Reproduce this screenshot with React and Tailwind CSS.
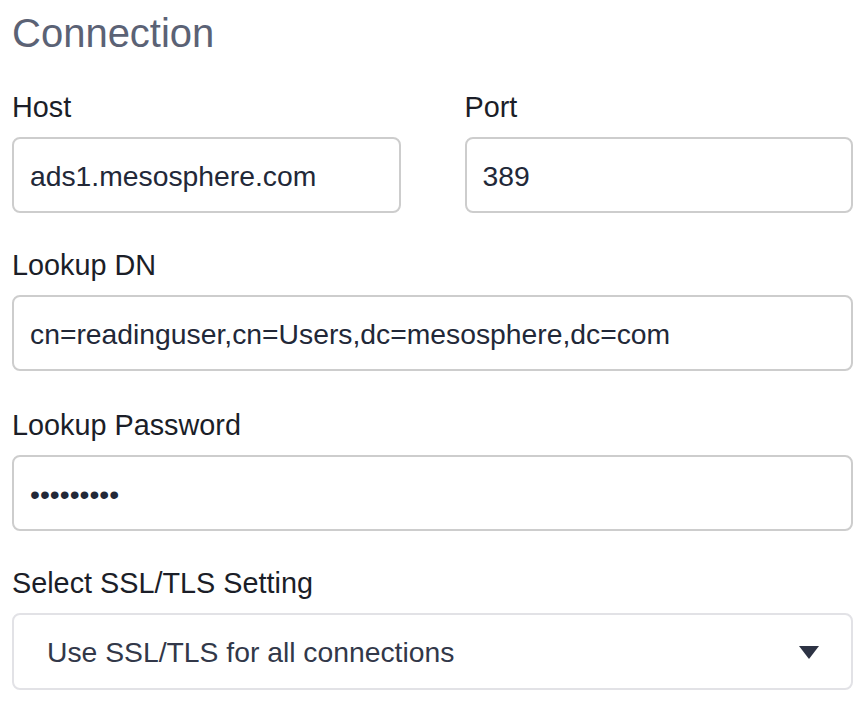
import React from 'react';

const font = { fontFamily: '"Liberation Sans", Arial, sans-serif' };

function Field({ label, children }) {
  return (
    <div className="flex flex-col">
      <label className="text-[28.8px] leading-[42px] text-[#1b1e28] mb-[9px]">{label}</label>
      {children}
    </div>
  );
}

function TextInput({ value, type = 'text' }) {
  return (
    <input
      type={type}
      value={value}
      readOnly
      className="h-[76px] w-full rounded-[8px] border-2 border-[#cdcdcd] bg-white px-[16px] pt-[2px] text-[28.3px] text-[#222838] outline-none"
    />
  );
}

export default function App() {
  return (
    <div className="bg-white min-h-[720px] w-[868px] pl-[12px] pr-[15px] pt-[10px]" style={font}>
      <h2 className="text-[40px] leading-[47px] text-[#5b6275] mb-[29px]">Connection</h2>

      <div className="flex flex-col gap-[31px]">
        <div className="grid grid-cols-2 gap-[64px]">
          <Field label="Host">
            <TextInput value="ads1.mesosphere.com" />
          </Field>
          <Field label="Port">
            <TextInput value="389" />
          </Field>
        </div>

        <Field label="Lookup DN">
          <TextInput value="cn=readinguser,cn=Users,dc=mesosphere,dc=com" />
        </Field>

        <div className="pt-[2px]">
          <Field label="Lookup Password">
            <TextInput type="password" value="secretpwd" />
          </Field>
        </div>

        <Field label="Select SSL/TLS Setting">
          <div className="h-[77px] w-full rounded-[8px] border-2 border-[#e2e2e6] bg-white pl-[33px] pr-[32px] pt-[2px] flex items-center justify-between">
            <span className="text-[28.3px] text-[#323849]">Use SSL/TLS for all connections</span>
            <svg width="20" height="13" viewBox="0 0 20 13">
              <path d="M0 0 H20 L10 13 Z" fill="#2d3344" />
            </svg>
          </div>
        </Field>
      </div>
    </div>
  );
}
